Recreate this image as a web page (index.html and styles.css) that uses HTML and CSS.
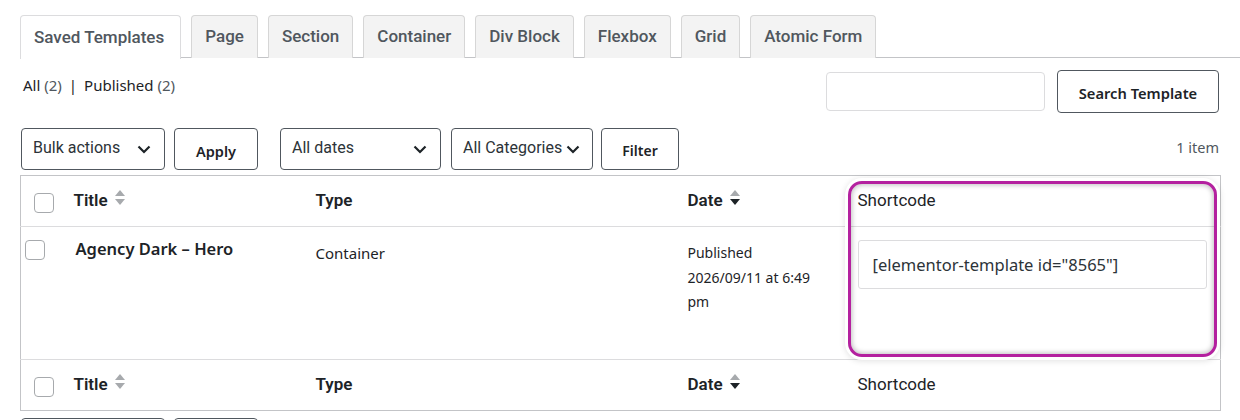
FILE: index.html
```html
<!DOCTYPE html>
<html lang="en">
<head>
    <meta charset="utf-8"/>
    <title>Saved Templates</title>
    <link rel="stylesheet" href="styles.css">
</head>
<body>
<div class="wrap">
    <nav class="tabs">
        <a class="tab active">Saved Templates</a>
        <a class="tab">Page</a>
        <a class="tab">Section</a>
        <a class="tab">Container</a>
        <a class="tab">Div Block</a>
        <a class="tab">Flexbox</a>
        <a class="tab">Grid</a>
        <a class="tab">Atomic Form</a>
    </nav>

    <div class="top-bar">
        <ul class="subsubsub">
            <li><a>All <span class="count">(2)</span></a><span class="sep">|</span></li>
            <li><a>Published <span class="count">(2)</span></a></li>
        </ul>
        <div class="search-box">
            <input class="search-input" type="search">
            <button class="button search-btn">Search Template</button>
        </div>
    </div>

    <div class="tablenav">
        <div class="select bulk">
            <span>Bulk actions</span>
            <svg class="chev" width="14" height="9" viewBox="0 0 14 9"><polyline points="1.5,1.5 7,7 12.5,1.5" fill="none" stroke="#1d2327" stroke-width="2.2"/></svg>
        </div>
        <button class="button apply">Apply</button>
        <div class="select dates">
            <span>All dates</span>
            <svg class="chev" width="14" height="9" viewBox="0 0 14 9"><polyline points="1.5,1.5 7,7 12.5,1.5" fill="none" stroke="#1d2327" stroke-width="2.2"/></svg>
        </div>
        <div class="select cats">
            <span>All Categories</span>
            <svg class="chev" width="14" height="9" viewBox="0 0 14 9"><polyline points="1.5,1.5 7,7 12.5,1.5" fill="none" stroke="#1d2327" stroke-width="2.2"/></svg>
        </div>
        <button class="button filter">Filter</button>
        <span class="num-items">1 item</span>
    </div>

    <div class="table-wrap">
        <table class="list-table">
            <colgroup>
                <col class="col-cb">
                <col class="col-title">
                <col class="col-type">
                <col class="col-date">
                <col class="col-short">
            </colgroup>
            <thead>
                <tr class="head-row">
                    <th class="check"><span class="checkbox"></span></th>
                    <th class="sortable">Title
                        <svg class="sort" width="10" height="18" viewBox="0 0 10 18"><polygon points="5,1 10,7 0,7" fill="#a7aaad"/><polygon points="0,10 10,10 5,16" fill="#a7aaad"/></svg>
                    </th>
                    <th>Type</th>
                    <th class="sortable">Date
                        <svg class="sort" width="10" height="18" viewBox="0 0 10 18"><polygon points="5,1 10,7 0,7" fill="#a7aaad"/><polygon points="0,10 10,10 5,16" fill="#1d2327"/></svg>
                    </th>
                    <th class="plain">Shortcode</th>
                </tr>
            </thead>
            <tbody>
                <tr class="item">
                    <td class="check"><span class="checkbox"></span></td>
                    <td class="title"><strong>Agency Dark – Hero</strong></td>
                    <td class="type">Container</td>
                    <td class="date">Published<br>2026/09/11 at 6:49<br>pm</td>
                    <td class="shortcode"><input class="code-input" type="text" value='[elementor-template id="8565"]' readonly></td>
                </tr>
            </tbody>
            <tfoot>
                <tr class="head-row">
                    <th class="check"><span class="checkbox"></span></th>
                    <th class="sortable">Title
                        <svg class="sort" width="10" height="18" viewBox="0 0 10 18"><polygon points="5,1 10,7 0,7" fill="#a7aaad"/><polygon points="0,10 10,10 5,16" fill="#a7aaad"/></svg>
                    </th>
                    <th>Type</th>
                    <th class="sortable">Date
                        <svg class="sort" width="10" height="18" viewBox="0 0 10 18"><polygon points="5,1 10,7 0,7" fill="#a7aaad"/><polygon points="0,10 10,10 5,16" fill="#1d2327"/></svg>
                    </th>
                    <th class="plain">Shortcode</th>
                </tr>
            </tfoot>
        </table>
        <div class="highlight"></div>
    </div>

    <div class="tablenav bottom">
        <div class="select bulk"></div>
        <button class="button apply"></button>
    </div>
</div>
</body>
</html>
```

FILE: styles.css
```css
body {
    margin: 0;
    background: #fff;
    color: #1d2327;
    font-family: "Noto Sans", sans-serif;
    font-size: 14px;
}
.wrap {
    padding: 15px 20px 0 20px;
}
.tabs {
    display: flex;
    gap: 10px;
    height: 43px;
    margin-right: -20px;
    border-bottom: 1px solid #c3c4c7;
    box-sizing: border-box;
}
.tab {
    display: flex;
    align-items: center;
    height: 43px;
    box-sizing: border-box;
    padding: 0 13px 2px 13px;
    background: #f3f3f3;
    border: 1px solid #d6d6d6;
    border-bottom: none;
    border-radius: 4px 4px 0 0;
    font-family: Roboto, sans-serif;
    font-size: 17px;
    font-weight: 500;
    color: #50575e;
}
.tab.active {
    background: #fff;
    height: 44px;
    padding: 0 16px 2px 13px;
    border-color: #dcdcde;
}
.top-bar {
    display: flex;
    justify-content: space-between;
    margin-top: 12px;
}
.subsubsub {
    list-style: none;
    display: flex;
    margin: 0;
    padding: 5px 0 0 3px;
    font-size: 15px;
    color: #1d2327;
}
.subsubsub .count {
    color: #50575e;
}
.subsubsub .sep {
    margin: 0 7px;
    color: #1d2327;
}
.search-box {
    display: flex;
    align-items: center;
    gap: 12px;
    margin-right: 1px;
}
.search-input {
    width: 219px;
    height: 39px;
    box-sizing: border-box;
    border: 1px solid #dcdcde;
    border-radius: 4px;
}
.button {
    box-sizing: border-box;
    height: 42px;
    background: #fff;
    border: 1px solid #50575e;
    border-radius: 4px;
    font-family: "Noto Sans", sans-serif;
    font-weight: 600;
    font-size: 14.5px;
    color: #1d2327;
    padding: 3px 0 0 0;
}
.search-btn {
    width: 162px;
    height: 43px;
    font-size: 14.7px;
}
.tablenav {
    display: flex;
    align-items: center;
    margin-top: 15px;
    height: 42px;
}
.select {
    display: flex;
    align-items: center;
    justify-content: space-between;
    height: 42px;
    box-sizing: border-box;
    padding: 0 13px 3px 11px;
    border: 1px solid #50575e;
    border-radius: 4px;
    font-family: Roboto, sans-serif;
    font-size: 16px;
    color: #2c3338;
}
.select .chev {
    margin-top: 3px;
}
.bulk {
    width: 144px;
    margin-left: 1px;
}
.apply {
    width: 84px;
    margin-left: 9px;
}
.dates {
    width: 161px;
    margin-left: 22px;
}
.cats {
    width: 142px;
    margin-left: 10px;
    padding-right: 12px;
}
.filter {
    width: 78px;
    margin-left: 8px;
    font-size: 14px;
}
.num-items {
    margin-left: auto;
    margin-right: 1px;
    padding-bottom: 4px;
    font-size: 14.5px;
    color: #50575e;
}
.table-wrap {
    position: relative;
    margin-top: 5px;
}
.list-table {
    width: 1200px;
    table-layout: fixed;
    border-collapse: collapse;
    border: 1px solid #c3c4c7;
}
.col-cb { width: 43px; }
.col-title { width: 242px; }
.col-type { width: 372px; }
.col-date { width: 170px; }
.col-short { width: 373px; }
.head-row {
    height: 51px;
}
.list-table th {
    padding: 0 10px 3px 10px;
    text-align: left;
    font-family: Roboto, sans-serif;
    font-size: 17px;
    font-weight: 600;
    color: #1d2327;
}
.list-table th.plain {
    font-weight: 400;
}
.list-table thead tr {
    border-bottom: 1px solid #dcdcde;
}
.list-table tfoot tr {
    border-top: 1px solid #dcdcde;
}
.list-table th.check {
    padding: 0 0 0 13px;
}
.list-table th.check .checkbox {
    margin-top: 3px;
}
.sort {
    vertical-align: -1px;
    margin-left: 3px;
}
.checkbox {
    display: block;
    width: 20px;
    height: 20px;
    box-sizing: border-box;
    border: 1px solid #a7aaad;
    border-radius: 4px;
}
.item {
    height: 133px;
}
.item td {
    vertical-align: top;
    padding: 0 10px;
}
.item td.check {
    padding: 13px 0 0 4px;
}
.item td.title {
    padding: 10px 10px 0 12px;
    font-size: 16.5px;
}
.item td.title strong {
    font-weight: 600;
}
.item td.type {
    padding-top: 16px;
    font-size: 15px;
}
.item td.date {
    padding-top: 14px;
    line-height: 24.5px;
    font-size: 14px;
}
.item td.shortcode {
    padding-top: 13px;
}
.code-input {
    width: 349px;
    height: 49px;
    box-sizing: border-box;
    border: 1px solid #dcdcde;
    border-radius: 3px;
    padding: 0 14px 0 14px;
    font-family: "Noto Sans", sans-serif;
    font-size: 16.5px;
    color: #2c3338;
}
.highlight {
    position: absolute;
    left: 828px;
    top: 6px;
    width: 369px;
    height: 176px;
    box-sizing: border-box;
    border: 3px solid #b4219f;
    border-radius: 14px;
    box-shadow: 0 0 0 3px #fff, 0 1px 6px 3px rgba(0, 0, 0, 0.12), inset 0 0 5px 1px rgba(0, 0, 0, 0.25);
}
.tablenav.bottom {
    margin-top: 7px;
}
```
